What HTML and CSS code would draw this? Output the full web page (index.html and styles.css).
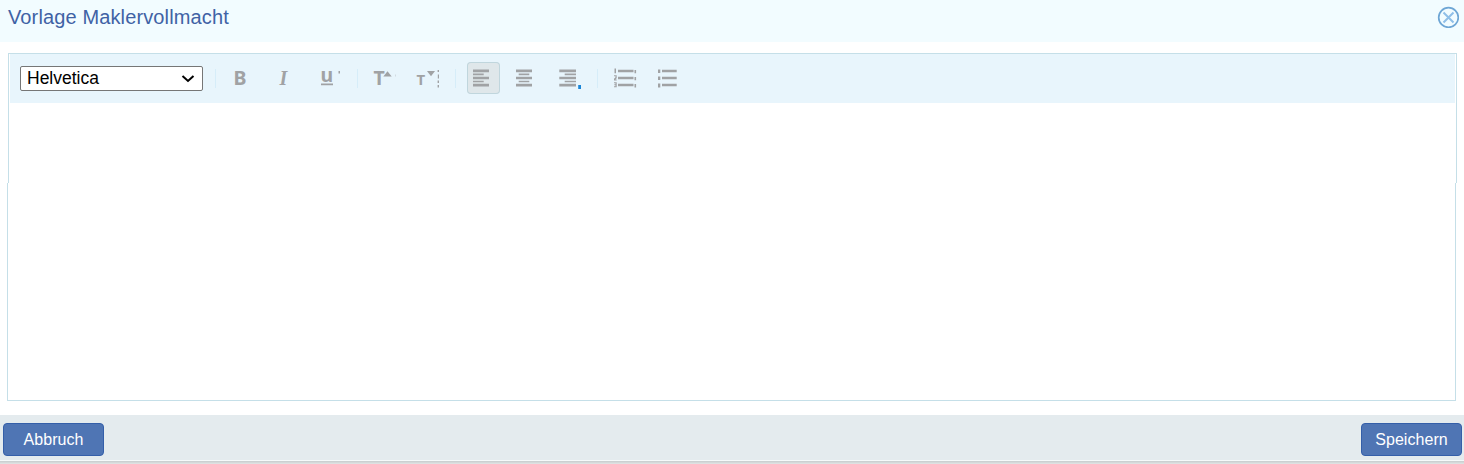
FILE: index.html
```html
<!DOCTYPE html>
<html lang="de">
  <head>
    <meta charset="UTF-8" />
    <meta name="viewport" content="width=device-width, initial-scale=1.0" />
    <title>Vorlage Maklervollmacht</title>
    <link rel="stylesheet" href="styles.css">
  </head>
  <body>
    <header class="dialog-header">
      <h1>Vorlage Maklervollmacht</h1>
      <button class="close" aria-label="Schließen">
        <svg width="22" height="22" viewBox="0 0 22 22">
          <circle cx="11.5" cy="11.5" r="9.8" />
          <path d="M6.5 6.5l10 10M16.5 6.5l-10 10" />
        </svg>
      </button>
    </header>

    <main class="editor">
      <div class="editor-top">
        <div class="toolbar">
          <div class="font-select">
            <span>Helvetica</span>
            <svg width="14" height="10" viewBox="0 0 14 10"><path d="M1.5 2l5.5 5 5.5-5" /></svg>
          </div>
          <span class="separator"></span>

          <div class="group">
            <button class="tool" aria-label="Fett">
              <svg viewBox="0 0 33 32"><text x="6.5" y="23" class="glyph">B</text></svg>
            </button>
            <button class="tool" aria-label="Kursiv">
              <svg viewBox="0 0 33 32"><text x="9.5" y="23" class="glyph italic">I</text></svg>
            </button>
            <button class="tool" aria-label="Unterstrichen">
              <svg viewBox="0 0 33 32">
                <text x="7.5" y="20" class="glyph">u</text>
                <path d="M8 21.5h12v1.7H8zM25.5 9h1.5v2.5h-1.5z" />
              </svg>
            </button>
          </div>
          <span class="separator"></span>

          <div class="group sizes">
            <button class="tool" aria-label="Schrift größer">
              <svg viewBox="0 0 33 32">
                <text x="4.5" y="23" class="glyph">T</text>
                <path d="M14.3 14.5l4.2-5.2 4.2 5.2z" />
                <path d="M26 12.5h1v2h-1z" opacity=".3" />
              </svg>
            </button>
            <button class="tool" aria-label="Schrift kleiner">
              <svg viewBox="0 0 33 32">
                <text x="5.5" y="23" class="glyph small">T</text>
                <path d="M16 9h8l-4 5.2z" />
                <path d="M26.6 8h1.4v2h-1.4zM26.8 12.5h1.2v4h-1.2zM26.6 18.5h1.4v2.5h-1.4zM26.6 23h1.4v2.5h-1.4z" />
              </svg>
            </button>
          </div>
          <span class="separator"></span>

          <div class="group">
            <button class="tool active" aria-label="Linksbündig">
              <svg viewBox="0 0 33 32">
                <path d="M6 7.5h16v2.8H6zM6 11.6h10.7v1.6H6zM6 14.7h16v2.6H6zM6 18.7h10.7v1.6H6zM6 21.7h16v2.8H6z" />
              </svg>
            </button>
            <button class="tool" aria-label="Zentriert">
              <svg viewBox="0 0 33 32">
                <path d="M6 7.5h16v2.8H6zM8.7 11.6h10.6v1.6H8.7zM6 14.7h16v2.6H6zM8.7 18.7h10.6v1.6H8.7zM6 21.7h16v2.8H6z" />
              </svg>
            </button>
            <button class="tool" aria-label="Rechtsbündig">
              <svg viewBox="0 0 33 32">
                <path d="M6.3 7.5H23v2.8H6.3zM11.7 11.6H23v1.6H11.7zM6.3 14.7H23v2.6H6.3zM11.7 18.7H23v1.6H11.7zM6.3 21.7H23v2.8H6.3z" />
                <path class="marker" d="M25.2 23h2.8v4h-2.8z" />
              </svg>
            </button>
          </div>
          <span class="separator"></span>

          <div class="group">
            <button class="tool" aria-label="Nummerierte Liste">
              <svg viewBox="0 0 33 32">
                <path d="M9 7.8h15.5v2.4H9zM9 14.8h15.5v2.4H9zM9 21.8h15.5v2.4H9z" />
                <path d="M5.5 6.5h1.5v4.7H5.5zM5 13.3h2.7v3L6.4 17.5h1.3v1H5v-1.7l1.5-1.5v-1H5zM5 20.2h2.7v5H5v-1h1.5v-1H5.3v-1h1.2v-1H5z" />
                <path d="M25.5 8h1.6v3.3h-1.6zM25.5 15h1.6v3.3h-1.6zM25.5 22h1.6v3.5h-1.6z" />
              </svg>
            </button>
            <button class="tool" aria-label="Aufzählung">
              <svg viewBox="0 0 33 32">
                <path d="M10 7.8h14.7v2.4H10zM10 14.8h14.7v2.4H10zM10 21.8h14.7v2.4H10z" />
                <path d="M6 7.5h2.3V11H6zM6 14.5h2.3V18H6zM6 21.5h2.3v4H6z" />
              </svg>
            </button>
          </div>
        </div>
      </div>
      <div class="editor-content"></div>
    </main>

    <footer class="dialog-footer">
      <button class="btn">Abbruch</button>
      <button class="btn">Speichern</button>
    </footer>
  </body>
</html>
```
FILE: styles.css
```css
* {
  box-sizing: border-box;
}

body {
  font-family: "Liberation Sans", Arial, sans-serif;
  background: #fff;
  margin: 0;
  height: 464px;
  display: flex;
  flex-direction: column;
  overflow: hidden;
}

button {
  font-family: inherit;
  padding: 0;
  border: 0;
  background: none;
}

.dialog-header {
  display: flex;
  justify-content: space-between;
  align-items: flex-start;
  height: 42px;
  padding: 6px 5px 0 8px;
  background: #f2fcff;
}

.dialog-header h1 {
  margin: 0;
  font-size: 20px;
  line-height: 22px;
  font-weight: normal;
  letter-spacing: 0.13px;
  color: #4062a5;
}

.close {
  width: 22px;
  height: 22px;
}

.close svg {
  display: block;
  fill: none;
  stroke: #6ea6d5;
  stroke-width: 1.7;
}

.close path {
  stroke: #8fbfe8;
  stroke-width: 2;
}

.editor {
  height: 373px;
  padding-top: 11px;
}

.editor-top {
  height: 130px;
  margin: 0 7px 0 8px;
  border: 1px solid #c5dfe8;
  border-bottom: 0;
  padding: 0 1px;
}

.editor-content {
  height: 218px;
  margin: 0 8px 0 7px;
  border: 1px solid #c5dfe8;
  border-top: 0;
}

.toolbar {
  display: flex;
  align-items: flex-start;
  height: 49px;
  padding: 8px 0 0 10px;
  background: #e8f5fc;
}

.font-select {
  display: flex;
  justify-content: space-between;
  align-items: center;
  width: 183px;
  height: 25px;
  margin: 4px 1px 0 0;
  padding: 0 7px 0 6px;
  border: 1px solid #767676;
  border-radius: 2px;
  background: #fff;
  font-size: 17.5px;
  line-height: 21px;
  color: #000;
}

.font-select svg {
  fill: none;
  stroke: #000;
  stroke-width: 2;
}

.separator {
  width: 1px;
  height: 19px;
  margin: 7px 11px 0;
  background: #d6edf9;
}

.group {
  display: flex;
  gap: 10px;
}

.group.sizes {
  gap: 9px;
}

.tool {
  width: 33px;
  height: 32px;
}

.tool svg {
  display: block;
  width: 33px;
  height: 32px;
  fill: #a0a2a4;
}

.tool.active {
  border-radius: 4px;
  background: #dfe7ea;
  box-shadow: inset 0 0 0 1px #c0d6dd;
}

.glyph {
  font: bold 19.5px "Noto Sans", sans-serif;
}

.glyph.italic {
  font: italic bold 20px "Liberation Serif", serif;
}

.glyph.small {
  font-size: 15px;
}

.marker {
  fill: #1a86d8;
}

.dialog-footer {
  display: flex;
  justify-content: space-between;
  align-items: flex-start;
  height: 49px;
  padding: 8px 2px 0 3px;
  background: linear-gradient(#e4ebee 45px, #f5fafa 45px, #f5fafa 46px, #c6cccd 46px, #e2e5e5 49px);
}

.btn {
  width: 101px;
  height: 33px;
  border: 1px solid #345fa9;
  border-radius: 4px;
  background: #4f75b4;
  color: #fff;
  font-size: 16px;
  letter-spacing: 0.05px;
}
```
